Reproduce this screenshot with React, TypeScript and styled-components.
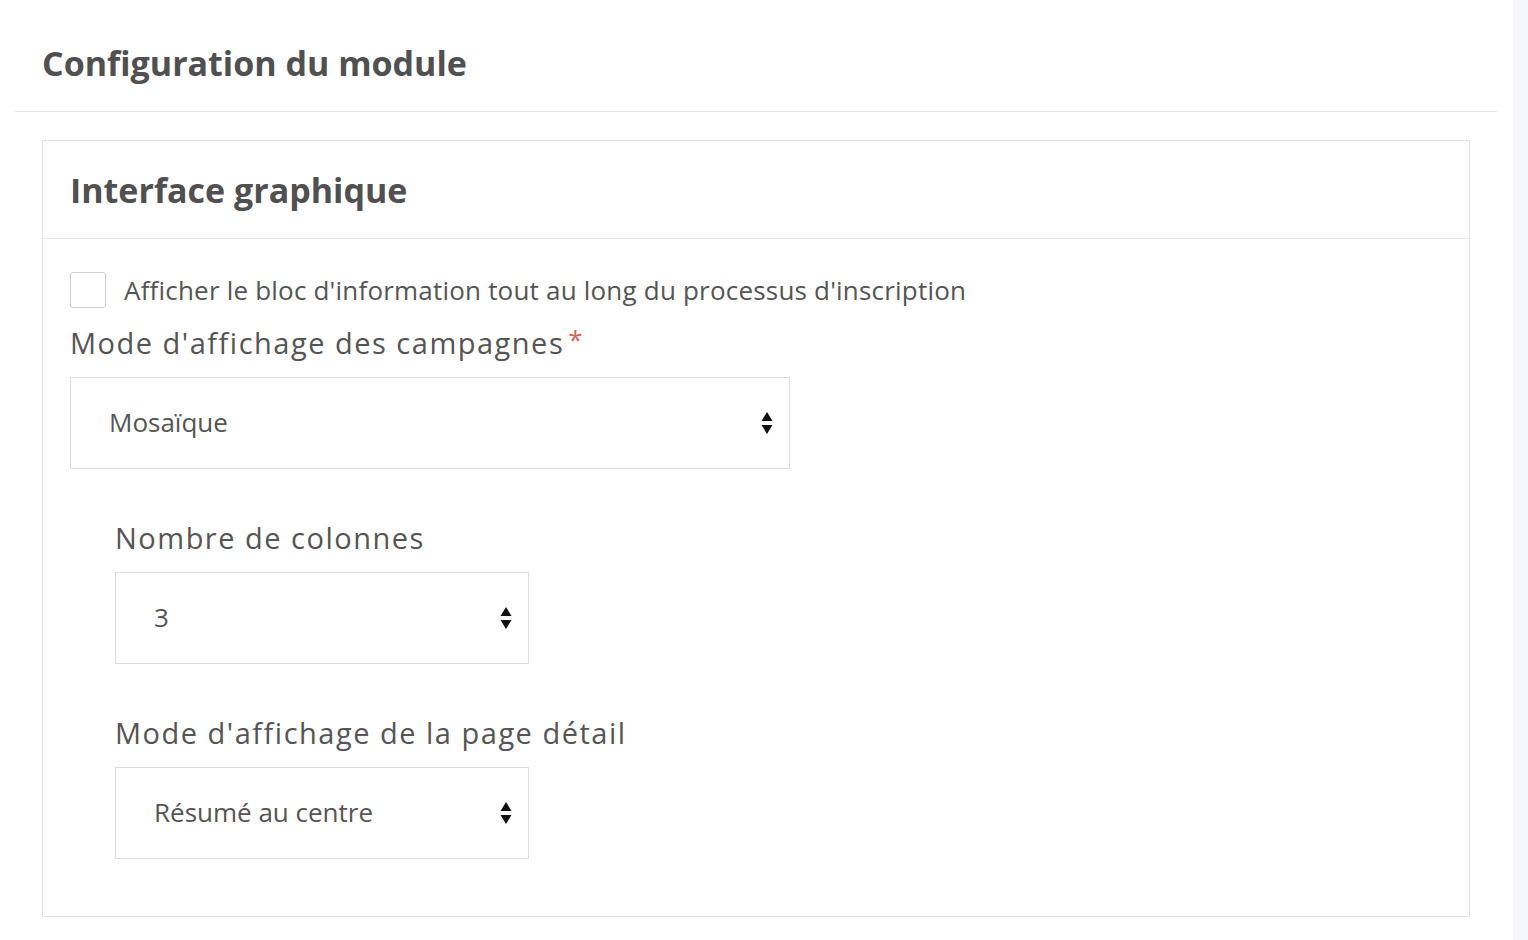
import React from "react";
import styled, { createGlobalStyle } from "styled-components";

const Global = createGlobalStyle`
  html, body { margin: 0; padding: 0; background: #ffffff; }
  body { font-family: "Open Sans", "Lato", sans-serif; color: #505050; }
  * { box-sizing: border-box; }
`;

const Shell = styled.div`
  display: flex;
  min-height: 940px;
`;

const Main = styled.main`
  flex: 1;
  padding: 0 16px 0 15px;
  background: #ffffff;
`;

const Strip = styled.div`
  width: 15px;
  background: #f6f7fd;
`;

const PageHeader = styled.header`
  height: 112px;
  display: flex;
  align-items: center;
  padding: 0 27px 0 27px;
  border-bottom: 1px solid #e6e6e6;
`;

const PageTitle = styled.h1`
  margin: 0;
  padding-top: 14px;
  font-size: 34px;
  font-weight: 700;
  color: #505050;
`;

const Card = styled.section`
  margin: 28px 27px 0 27px;
  border: 1px solid #e1e1e1;
  min-height: 777px;
`;

const CardHeader = styled.div`
  height: 98px;
  display: flex;
  align-items: center;
  padding: 0 27px;
  border-bottom: 1px solid #e3e3e3;
`;

const CardTitle = styled.h2`
  margin: 0;
  font-size: 34px;
  font-weight: 700;
  color: #505050;
`;

const CardBody = styled.div`
  padding: 33px 27px 56px 27px;
  display: flex;
  flex-direction: column;
`;

const CheckRow = styled.label`
  display: flex;
  align-items: center;
  gap: 18px;
  font-size: 26px;
  letter-spacing: 0.2px;
  color: #555555;
`;

const CheckBox = styled.span`
  width: 36px;
  height: 36px;
  border: 1px solid #cfcfcf;
  border-radius: 3px;
  background: #fff;
  flex: none;
`;

const Field = styled.div<{ $indent?: number; $top?: number }>`
  display: flex;
  flex-direction: column;
  margin-left: ${(p) => p.$indent ?? 0}px;
  margin-top: ${(p) => p.$top ?? 0}px;
`;

const Label = styled.div`
  font-size: 29px;
  color: #555555;
  letter-spacing: 1.5px;
  height: 36px;
  display: flex;
  align-items: center;
  margin-bottom: 17px;
`;

const Star = styled.span`
  color: #e35d52;
  margin-left: 4px;
  font-size: 26px;
  position: relative;
  top: -3px;
`;

const SelectBox = styled.div<{ $width: number }>`
  position: relative;
  width: ${(p) => p.$width}px;
  height: 92px;
  border: 1px solid #dcdcdc;
  background: #fff;
  display: flex;
  align-items: center;
  padding-left: 38px;
  padding-bottom: 3px;
  font-size: 26px;
  color: #555555;
`;

const Arrows = styled.svg`
  position: absolute;
  right: 16px;
  top: 50%;
  transform: translateY(-50%);
`;

function Select({ value, width }: { value: string; width: number }) {
  return (
    <SelectBox $width={width}>
      {value}
      <Arrows width="12" height="24" viewBox="0 0 12 24">
        <polygon points="6,1 11.5,10 0.5,10" fill="#111" />
        <polygon points="0.5,14 11.5,14 6,23" fill="#111" />
      </Arrows>
    </SelectBox>
  );
}

export default function App() {
  return (
    <>
      <Global />
      <Shell>
        <Main>
          <PageHeader>
            <PageTitle>Configuration du module</PageTitle>
          </PageHeader>
          <Card>
            <CardHeader>
              <CardTitle>Interface graphique</CardTitle>
            </CardHeader>
            <CardBody>
              <CheckRow>
                <CheckBox />
                Afficher le bloc d'information tout au long du processus d'inscription
              </CheckRow>
              <Field $top={16}>
                <Label>
                  Mode d'affichage des campagnes<Star>*</Star>
                </Label>
                <Select value="Mosaïque" width={720} />
              </Field>
              <Field $indent={45} $top={50}>
                <Label>Nombre de colonnes</Label>
                <Select value="3" width={414} />
              </Field>
              <Field $indent={45} $top={50}>
                <Label>Mode d'affichage de la page détail</Label>
                <Select value="Résumé au centre" width={414} />
              </Field>
            </CardBody>
          </Card>
        </Main>
        <Strip />
      </Shell>
    </>
  );
}
